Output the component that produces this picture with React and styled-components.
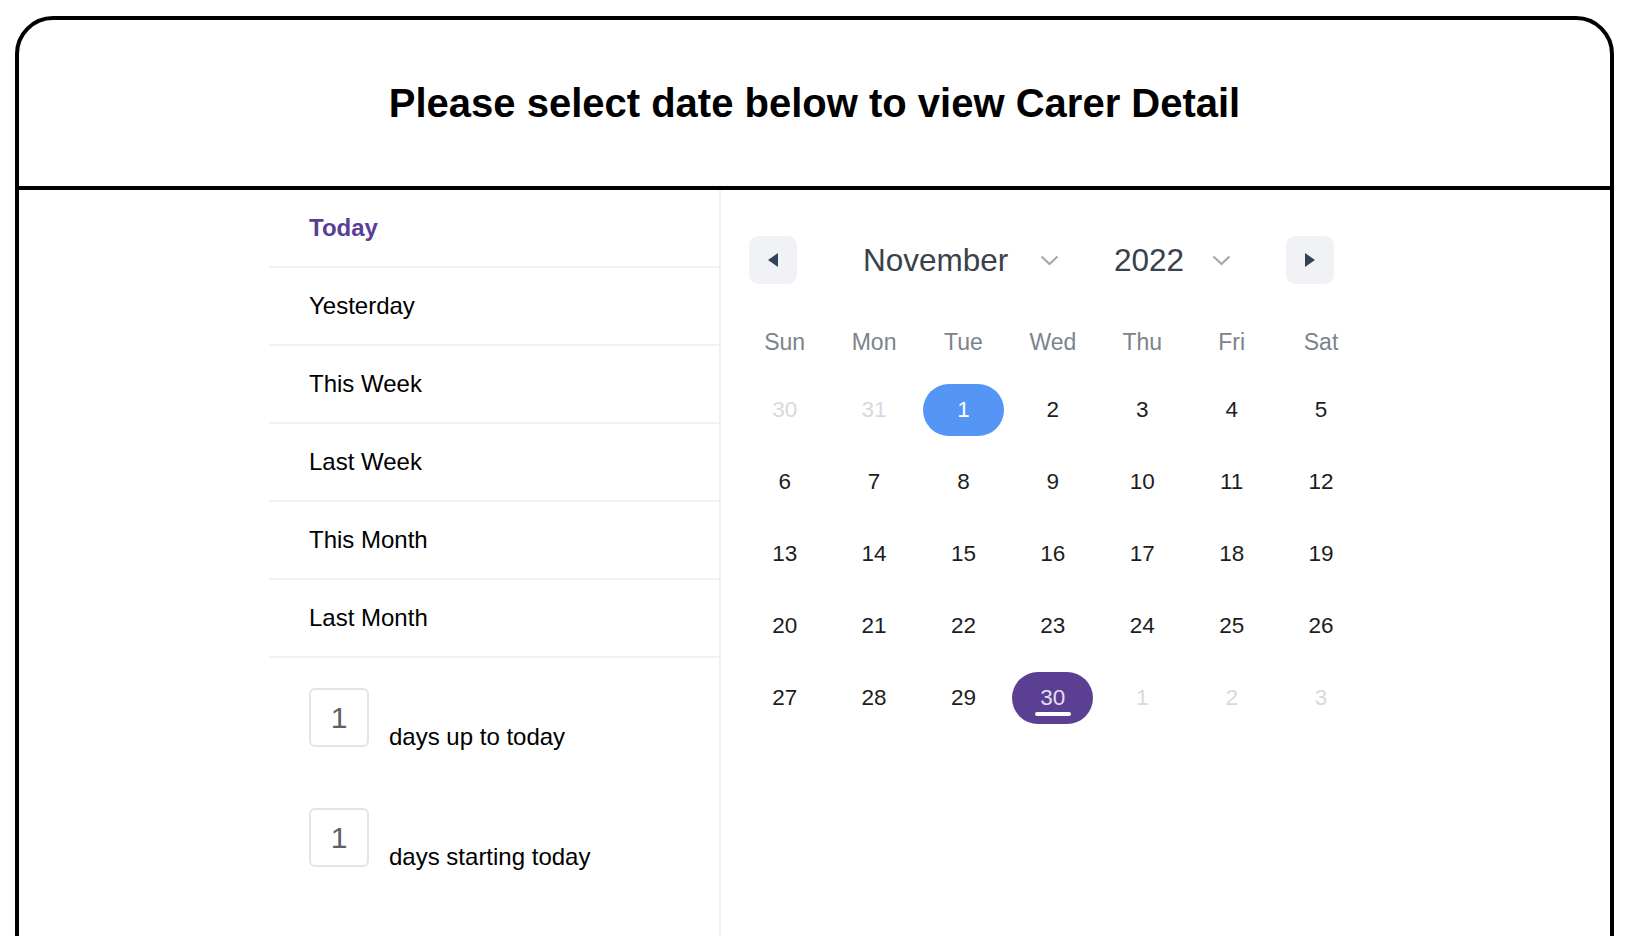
import React, { useState } from 'react';
import styled, { createGlobalStyle, css } from 'styled-components';

const GlobalStyle = createGlobalStyle`
  html, body {
    margin: 0;
    padding: 0;
    background: #fff;
    overflow: hidden;
  }
  body {
    font-family: "Liberation Sans", Arial, Helvetica, sans-serif;
  }
`;

const Page = styled.div`
  height: 100vh;
  overflow: hidden;
  box-sizing: border-box;
  padding: 16px 12px 0 15px;
`;

const Card = styled.div`
  box-sizing: border-box;
  width: 1599px;
  height: 980px;
  border: 4px solid #000;
  border-radius: 38px;
  display: flex;
  flex-direction: column;
`;

const Header = styled.div`
  height: 166px;
  display: flex;
  align-items: center;
  justify-content: center;
  border-bottom: 4px solid #000;
`;

const Title = styled.h1`
  margin: 0;
  font-size: 40px;
  font-weight: 700;
  color: #000;
`;

const Body = styled.div`
  flex: 1;
  display: flex;
  padding-left: 250px;
`;

const Sidebar = styled.div`
  width: 450px;
  border-right: 2px solid #f1f0f6;
`;

const Preset = styled.div`
  height: 76px;
  display: flex;
  align-items: center;
  padding-left: 40px;
  border-bottom: 2px solid #f1f0f6;
  font-size: 24px;
  color: #000;
  cursor: pointer;

  ${p => p.active && css`
    color: #5a3d96;
    font-weight: 700;
  `}
`;

const RangeList = styled.div`
  padding: 30px 0 0 40px;
  display: flex;
  flex-direction: column;
  gap: 61px;
`;

const RangeRow = styled.div`
  display: flex;
  align-items: flex-end;
`;

const DaysInput = styled.input`
  box-sizing: border-box;
  width: 60px;
  height: 59px;
  border: 2px solid #e1e5ea;
  border-radius: 6px;
  text-align: center;
  font-family: inherit;
  font-size: 30px;
  color: #5d6166;
  outline: none;
  padding: 0;
`;

const RangeLabel = styled.span`
  margin-left: 20px;
  margin-bottom: -4px;
  font-size: 24px;
  color: #000;
`;

const CalendarPanel = styled.div`
  padding: 46px 0 0 19px;
`;

const Nav = styled.div`
  display: flex;
  align-items: center;
  height: 48px;
  margin-left: 9px;
`;

const NavButton = styled.button`
  width: 48px;
  height: 48px;
  border: none;
  border-radius: 9px;
  background: #f0f2f6;
  display: flex;
  align-items: center;
  justify-content: center;
  padding: 0;
  cursor: pointer;
  margin-right: ${p => p.gap || 0}px;
`;

const Select = styled.div`
  width: ${p => p.width}px;
  margin-right: ${p => p.gap || 0}px;
  display: flex;
  align-items: center;
  justify-content: space-between;
  font-size: 31.5px;
  color: #39424c;
  cursor: pointer;
`;

const WeekGrid = styled.div`
  display: grid;
  grid-template-columns: repeat(7, 89.4px);
  height: 56px;
  margin-top: 30px;
  align-items: center;
`;

const WeekDay = styled.div`
  text-align: center;
  font-size: 23px;
  color: #7b848c;
`;

const DayGrid = styled.div`
  display: grid;
  grid-template-columns: repeat(7, 89.4px);
  grid-auto-rows: 72px;
  margin-top: 4px;
`;

const DayCell = styled.div`
  display: flex;
  align-items: center;
  justify-content: center;
`;

const DayPill = styled.div`
  position: relative;
  width: 81px;
  height: 52px;
  border-radius: 26px;
  display: flex;
  align-items: center;
  justify-content: center;
  font-size: 22.5px;
  color: ${p => (p.muted ? '#d6dade' : '#1d1d1f')};
  cursor: pointer;

  ${p => p.variant === 'start' && css`
    background: #5595f6;
    color: #fff;
  `}
  ${p => p.variant === 'today' && css`
    background: #5a3f93;
    color: #e4def2;
  `}
`;

const TodayBar = styled.span`
  position: absolute;
  left: 50%;
  top: 40px;
  width: 36px;
  height: 4px;
  margin-left: -18px;
  border-radius: 2px;
  background: #fff;
`;

const Triangle = ({ dir }) => (
  <svg width="12" height="16" viewBox="0 0 12 16">
    <polygon
      points={dir === 'left' ? '11,1 11,15 1,8' : '1,1 1,15 11,8'}
      fill="#344257"
    />
  </svg>
);

const Chevron = () => (
  <svg width="19" height="11" viewBox="0 0 19 11">
    <polyline
      points="1.5,1.5 9.5,9 17.5,1.5"
      fill="none"
      stroke="#a5a9ad"
      strokeWidth="2.2"
    />
  </svg>
);

const presets = ['Today', 'Yesterday', 'This Week', 'Last Week', 'This Month', 'Last Month'];
const weekDays = ['Sun', 'Mon', 'Tue', 'Wed', 'Thu', 'Fri', 'Sat'];

function buildDays() {
  const days = [{ n: 30, muted: true }, { n: 31, muted: true }];
  for (let i = 1; i <= 30; i++) days.push({ n: i });
  for (let i = 1; i <= 3; i++) days.push({ n: i, muted: true });
  return days;
}

export default function App() {
  const [active, setActive] = useState('Today');
  const [upTo, setUpTo] = useState('1');
  const [starting, setStarting] = useState('1');
  const days = buildDays();

  return (
    <>
      <GlobalStyle />
      <Page>
        <Card>
          <Header>
            <Title>Please select date below to view Carer Detail</Title>
          </Header>
          <Body>
            <Sidebar>
              {presets.map(p => (
                <Preset key={p} active={active === p} onClick={() => setActive(p)}>
                  {p}
                </Preset>
              ))}
              <RangeList>
                <RangeRow>
                  <DaysInput value={upTo} onChange={e => setUpTo(e.target.value)} />
                  <RangeLabel>days up to today</RangeLabel>
                </RangeRow>
                <RangeRow>
                  <DaysInput value={starting} onChange={e => setStarting(e.target.value)} />
                  <RangeLabel>days starting today</RangeLabel>
                </RangeRow>
              </RangeList>
            </Sidebar>

            <CalendarPanel>
              <Nav>
                <NavButton gap={66}><Triangle dir="left" /></NavButton>
                <Select width={196} gap={55}>
                  <span>November</span>
                  <Chevron />
                </Select>
                <Select width={117} gap={55}>
                  <span>2022</span>
                  <Chevron />
                </Select>
                <NavButton><Triangle dir="right" /></NavButton>
              </Nav>

              <WeekGrid>
                {weekDays.map(d => <WeekDay key={d}>{d}</WeekDay>)}
              </WeekGrid>

              <DayGrid>
                {days.map((d, i) => {
                  let variant;
                  if (!d.muted && d.n === 1) variant = 'start';
                  if (!d.muted && d.n === 30) variant = 'today';
                  return (
                    <DayCell key={i}>
                      <DayPill muted={d.muted} variant={variant}>
                        {d.n}
                        {variant === 'today' && <TodayBar />}
                      </DayPill>
                    </DayCell>
                  );
                })}
              </DayGrid>
            </CalendarPanel>
          </Body>
        </Card>
      </Page>
    </>
  );
}
